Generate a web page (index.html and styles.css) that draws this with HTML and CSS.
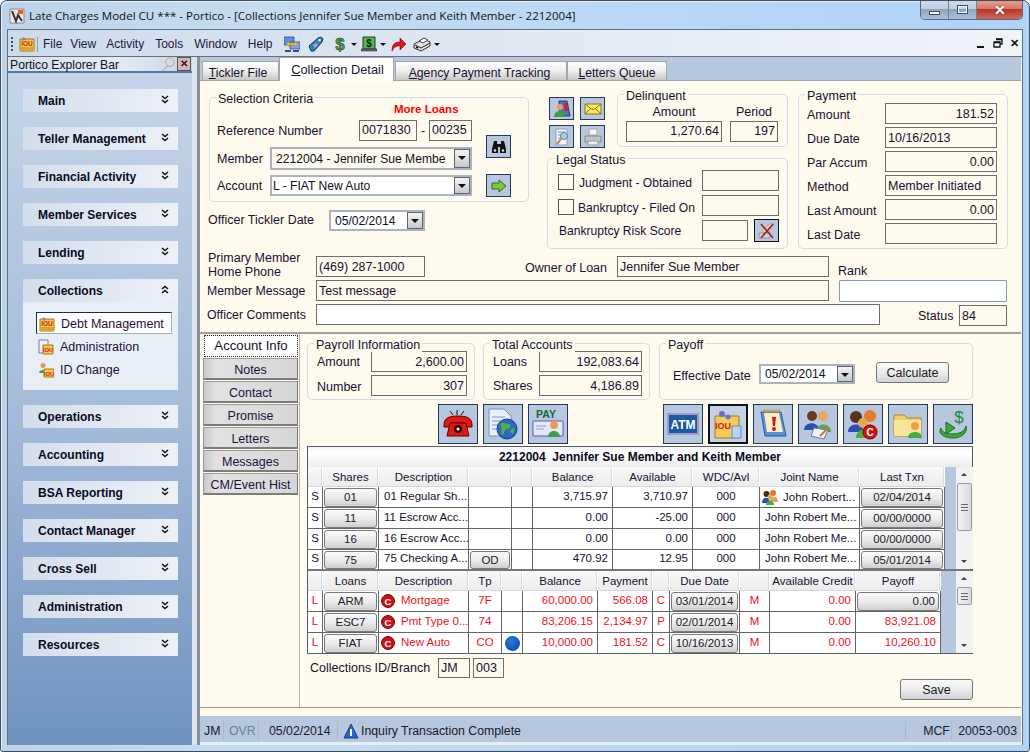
FILE: index.html
```html
<!DOCTYPE html>
<html lang="en">
<head>
<meta charset="utf-8">
<title>Portico</title>
<link rel="stylesheet" href="styles.css">
</head>
<body>
<svg class="defs" aria-hidden="true">
  <symbol id="iou" viewBox="0 0 16 16"><path d="M1 3h14v12H1z" fill="#f2c94a" stroke="#a87a14"/><path d="M1 11h14v4H1z" fill="#d9a52a"/><path d="M4 1l3 2-3 2z" fill="#6f7fc0"/><text x="8" y="10" font-size="6.5" font-weight="700" text-anchor="middle" fill="#d8201a" font-family="Liberation Sans">IOU</text></symbol>
  <symbol id="iouadm" viewBox="0 0 16 16"><path d="M1 1h9v13H1z" fill="#eef2fa" stroke="#6f7f9a"/><path d="M5 6h10v9H5z" fill="#f2c94a" stroke="#a87a14"/><text x="10" y="13" font-size="5.5" font-weight="700" text-anchor="middle" fill="#d8201a" font-family="Liberation Sans">IOU</text></symbol>
  <symbol id="iouid" viewBox="0 0 16 16"><circle cx="5" cy="3.5" r="2.5" fill="#e09a50"/><path d="M1 11c0-4 8-4 8 0z" fill="#3f9f45"/><path d="M6 7h10v8H6z" fill="#f2c94a" stroke="#a87a14"/><text x="11" y="13.5" font-size="5.5" font-weight="700" text-anchor="middle" fill="#d8201a" font-family="Liberation Sans">IOU</text></symbol>
  <symbol id="swap" viewBox="0 0 16 16"><path d="M0 1h10v8H0z" fill="#5f8fe0" stroke="#2f4f9a" stroke-width=".8"/><path d="M6 6h10v7H6z" fill="#7f9fe8" stroke="#2f4f9a" stroke-width=".8"/><path d="M1 14h6v2H1zM9 14h6v2H9z" fill="#3a4f8a"/><path d="M2 8l3-2.500V7h6V5.500L14 8l-3 2.500V9H5v1.500z" fill="#f5c518" stroke="#a07a10" stroke-width=".4"/></symbol>
  <symbol id="tag" viewBox="0 0 16 16"><path d="M1 10L10 2l3-1 2 2-1 3-8 9-3 0z" fill="#1d8fb5" stroke="#10354f"/><circle cx="11.500" cy="4" r="1.500" fill="#fff" stroke="#777" stroke-width=".5"/><path d="M5 9.500L8 7l2 2-3 3z" fill="#e88ac8"/></symbol>
  <symbol id="dollar" viewBox="0 0 16 16"><text x="8" y="14" font-size="17" font-weight="700" text-anchor="middle" fill="#49a83a" stroke="#1c2c1c" stroke-width=".5" font-family="Liberation Sans">$</text></symbol>
  <symbol id="till" viewBox="0 0 16 16"><path d="M2 1h12v12H2z" fill="#55b457" stroke="#333"/><text x="8" y="11" font-size="10" font-weight="700" text-anchor="middle" fill="#0a2a0a" font-family="Liberation Sans">$</text><path d="M0 13h16v2H0z" fill="#666" stroke="#222" stroke-width=".5"/></symbol>
  <symbol id="redarrow" viewBox="0 0 16 16"><path d="M1 15c0-7 3-9 8-9V2l6 6-6 6v-4c-4 0-6 1-8 5z" fill="#d81818" stroke="#7a0a0a" stroke-width=".6"/></symbol>
  <symbol id="printer" viewBox="0 0 18 16"><path d="M1 8l10-5 6 3v4l-9 5-7-3z" fill="#e4e4e4" stroke="#333"/><path d="M6 5l5-3 4 2-5 3z" fill="#fff" stroke="#444"/><path d="M2 9l6 3 9-5" fill="none" stroke="#222"/><path d="M3 11l2 1" stroke="#111" stroke-width="1.500"/></symbol>
  <symbol id="pin" viewBox="0 0 16 16"><circle cx="10.500" cy="5.500" r="4.500" fill="#dcdcdc" stroke="#a8a8a8"/><path d="M8 9l-6 6 2-1 5-4z" fill="#c8c8c8" stroke="#a8a8a8" stroke-width=".5"/></symbol>
  <symbol id="bino" viewBox="0 0 16 14"><path d="M3 1h3v3h4V1h3l2 8v4H9V7H7v6H1V9z" fill="#111"/><circle cx="4" cy="10.500" r="1.300" fill="#ddd"/><circle cx="12" cy="10.500" r="1.300" fill="#ddd"/></symbol>
  <symbol id="garrow" viewBox="0 0 16 14"><path d="M1 4h7V1l7 6-7 6v-3H1z" fill="#7cc83a" stroke="#2f6a1c"/></symbol>
  <symbol id="bookp" viewBox="0 0 18 18"><path d="M6 1h8l3 15H7z" fill="#4c74c0" stroke="#2c3f70"/><path d="M11 3h3l1 8h-3z" fill="#d02020"/><circle cx="7" cy="7" r="3" fill="#e8a050"/><path d="M1 17c0-8 11-8 11 0z" fill="#3f9f45"/></symbol>
  <symbol id="mail" viewBox="0 0 18 14"><path d="M1 2h16v10H1z" fill="#f8ec5a" stroke="#8a7a18"/><path d="M1 2l8 6 8-6M1 12l6-6M17 12l-6-6" fill="none" stroke="#8a7a18"/></symbol>
  <symbol id="docsearch" viewBox="0 0 18 18"><path d="M3 1h11v16H3z" fill="#f2f5fb" stroke="#8a9ec5"/><path d="M5 4h7M5 7h4M5 10h3" stroke="#7a8fbe"/><circle cx="11" cy="8" r="3.500" fill="#a8d0f0" stroke="#777"/><path d="M8 11l-4 5" stroke="#c87a30" stroke-width="2"/></symbol>
  <symbol id="print2" viewBox="0 0 18 18"><path d="M5 1h8v6H5z" fill="#f4f4f4" stroke="#aaa"/><path d="M1 8h16v6H1z" fill="#c4c4c4" stroke="#888"/><path d="M4 13h10v4H4z" fill="#efefef" stroke="#999"/></symbol>
  <symbol id="xtool" viewBox="0 0 18 18"><path d="M4 9L13 1l3 2-8 9z" fill="#e8dcc0" stroke="#888" stroke-width=".6"/><path d="M1 11h11v5H1z" fill="#c8d0dc" stroke="#667" stroke-width=".5"/><path d="M3 2l12 14M15 2L3 16" stroke="#b81818" stroke-width="1.600"/></symbol>
  <symbol id="phone" viewBox="0 0 32 32"><path d="M15 2v5M8 3l3 4M22 3l-3 4" stroke="#111"/><path d="M2 17c0-7 5-9 14-9s14 2 14 9v2h-7v-4H9v4H2z" fill="#e01818" stroke="#600"/><path d="M8 15h16l3 13H5z" fill="#e01818" stroke="#600"/><circle cx="16" cy="21" r="4" fill="#300"/><circle cx="16" cy="21" r="1.500" fill="#fff"/></symbol>
  <symbol id="web" viewBox="0 0 32 32"><path d="M2 1h15l7 7v20H2z" fill="#e8eefa" stroke="#7f8fb5"/><path d="M5 9h13M5 13h9M5 17h6M5 21h5" stroke="#7f9ad0"/><circle cx="20" cy="21" r="10" fill="#2b67c8" stroke="#173b80"/><path d="M13 16c4-3 6 1 9 0 3 1 1 5-2 5s-2 5-5 6c-2-3 1-6-2-11zM25 20l3 1-2 5-3-2z" fill="#4fb03f"/></symbol>
  <symbol id="pay" viewBox="0 0 32 32"><text x="14" y="10" font-size="10.500" font-weight="700" text-anchor="middle" fill="#0f6b2c" font-family="Liberation Sans">PAY</text><path d="M1 13h30v15H1z" fill="#e4e8fb" stroke="#5a5ac0"/><path d="M4 18h10M4 21h8" stroke="#8a9ad0"/><circle cx="22" cy="17" r="4" fill="#e8a050"/><path d="M16 29c0-8 12-8 12 0z" fill="#3f9f45"/></symbol>
  <symbol id="atm" viewBox="0 0 32 32"><path d="M0 5h32v22H0z" fill="#a09ac8"/><path d="M2 7h28v18H2z" fill="#1c5ba0"/><text x="16" y="21" font-size="12" font-weight="700" text-anchor="middle" fill="#fff" font-family="Liberation Sans">ATM</text></symbol>
  <symbol id="folderiou" viewBox="0 0 32 32"><path d="M3 8h24v22H3z" fill="#f0cc5a" stroke="#a87a14"/><circle cx="10" cy="6" r="3" fill="#6f6fc8"/><circle cx="16" cy="9" r="2.500" fill="#6f6fc8"/><text x="11" y="21" font-size="9" font-weight="700" text-anchor="middle" fill="#d8201a" font-family="Liberation Sans">IOU</text><path d="M20 18h9v12h-9z" fill="#b8d4f5" stroke="#6a8ac0"/></symbol>
  <symbol id="notepad" viewBox="0 0 32 32"><path d="M4 4h20l5 24H8z" fill="#5a90d8" stroke="#2f5a9c"/><path d="M7 5h15l4 19H10z" fill="#f5eec8"/><path d="M6 3h17" stroke="#c89a30" stroke-width="3" stroke-dasharray="2 1"/><path d="M15 9h4l-1 9h-2z" fill="#d81818"/><circle cx="17" cy="21" r="2" fill="#d81818"/></symbol>
  <symbol id="peoplesign" viewBox="0 0 32 32"><circle cx="10" cy="8" r="5" fill="#6a3a1a"/><path d="M2 22c0-9 15-9 15 0z" fill="#2850b8"/><circle cx="21" cy="8" r="5" fill="#e8a860"/><path d="M14 24c0-10 15-10 15 0z" fill="#4faa5a"/><path d="M12 20l14 2-4 9-13-3z" fill="#eef2fa" stroke="#6a7a9a"/><path d="M18 28l9-9" stroke="#c87a30" stroke-width="2"/></symbol>
  <symbol id="peoplec" viewBox="0 0 32 32"><circle cx="9" cy="9" r="6" fill="#5a3018"/><path d="M1 24c0-10 16-10 16 0z" fill="#2850b8"/><circle cx="23" cy="8" r="6" fill="#e87a30"/><path d="M15 24c0-10 16-10 16 0z" fill="#e8a860"/><circle cx="16" cy="15" r="5" fill="#e0a858"/><path d="M9 30c0-11 14-11 14 0z" fill="#4faa3a"/><circle cx="23" cy="24" r="7" fill="#d81010" stroke="#700"/><text x="23" y="28" font-size="10" font-weight="700" text-anchor="middle" fill="#fff" font-family="Liberation Sans">C</text></symbol>
  <symbol id="folderp" viewBox="0 0 32 32"><path d="M2 7h10l3 3h14v18H2z" fill="#f0cf68" stroke="#b08a20"/><path d="M2 12h27v16H2z" fill="#f8e49a"/><circle cx="23" cy="18" r="4" fill="#e8a050"/><path d="M16 30c0-8 14-8 14 0z" fill="#3faf45"/></symbol>
  <symbol id="recur" viewBox="0 0 32 32"><text x="22" y="15" font-size="17" text-anchor="middle" fill="#1a8a3a" font-family="Liberation Sans">$</text><path d="M4 20c-4 6 4 10 12 10s15-5 13-12c-1 5-6 8-13 8s-11-2-12-6z" fill="#3fa83a" stroke="#1a6a20"/><path d="M9 14l9 6-9 6z" fill="#3fa83a" stroke="#1a6a20"/></symbol>
  <symbol id="redc" viewBox="0 0 14 14"><circle cx="7" cy="7" r="6.500" fill="#d01010" stroke="#701010"/><text x="7" y="10.500" font-size="9.500" font-weight="700" text-anchor="middle" fill="#fff" font-family="Liberation Sans">C</text></symbol>
  <symbol id="group" viewBox="0 0 16 16"><circle cx="4.500" cy="5" r="3" fill="#4a2a18"/><circle cx="11" cy="4" r="3" fill="#e07a30"/><path d="M0 14c0-7 8-7 8 0z" fill="#2850b8"/><path d="M8 13c0-7 8-7 8 0z" fill="#e8a050"/><circle cx="8" cy="8" r="2.500" fill="#e0a858"/><path d="M4 16c0-6 8-6 8 0z" fill="#3faf45"/></symbol>
  <symbol id="info" viewBox="0 0 16 16"><path d="M8 1l7 14H1z" fill="#2a64c8" stroke="#1a3a80"/><path d="M7 6h2v7H7z" fill="#fff"/></symbol>
  <symbol id="dbl" viewBox="0 0 8 9"><path d="M1 1l3 2.500L7 1M1 5l3 2.500L7 5" fill="none" stroke="#111" stroke-width="1.500"/></symbol>
  <symbol id="dblup" viewBox="0 0 8 9"><path d="M1 4L4 1.500 7 4M1 8l3-2.500L7 8" fill="none" stroke="#111" stroke-width="1.500"/></symbol>
</svg>

<div class="window">
  <header class="titlebar">
    <svg class="t-icon" viewBox="0 0 16 16"><path d="M1 1h14v14H1z" fill="#f5e8e0" stroke="#888"/><path d="M3 3l4 10 2-6 4 6" fill="none" stroke="#334" stroke-width="2"/><path d="M9 2h5v4H9z" fill="#e8601c"/></svg>
    <span class="t-text">Late Charges Model CU *** - Portico - [Collections Jennifer Sue Member and Keith Member - 2212004]</span>
    <div class="wctl">
      <span class="wb wb-min"><i></i></span>
      <span class="wb wb-max"><i></i></span>
      <span class="wb wb-close">✕</span>
    </div>
  </header>

  <div class="frame">
    <nav class="menubar">
      <span class="grip"></span>
      <svg class="mi16"><use href="#iou"/></svg>
      <span class="msep"></span>
      <span class="menu m-file">File</span>
      <span class="menu m-view">View</span>
      <span class="menu m-act">Activity</span>
      <span class="menu m-tools">Tools</span>
      <span class="menu m-win">Window</span>
      <span class="menu m-help">Help</span>
      <svg class="mi16 tb1"><use href="#swap"/></svg>
      <svg class="mi16 tb2"><use href="#tag"/></svg>
      <svg class="mi16 tb3"><use href="#dollar"/></svg>
      <span class="caret c1"></span>
      <svg class="mi16 tb4"><use href="#till"/></svg>
      <span class="caret c1"></span>
      <svg class="mi16 tb5"><use href="#redarrow"/></svg>
      <svg class="mi18 tb6"><use href="#printer"/></svg>
      <span class="caret c2"></span>
      <div class="mdi">
        <span class="mdi-min"></span>
        <svg class="mdi-res" viewBox="0 0 10 10"><path d="M3 1h6v5H7M1 4h6v5H1z" fill="none" stroke="#111" stroke-width="1.300"/><path d="M3 1.500h6M1 4.500h6" stroke="#111" stroke-width="1.500"/></svg>
        <span class="mdi-x">✕</span>
      </div>
    </nav>

    <div class="main">
      <aside class="side">
        <div class="side-head">
          <span class="side-title">Portico Explorer Bar</span>
          <svg class="side-pin"><use href="#pin"/></svg>
          <span class="side-x">✕</span>
        </div>
        <div class="side-body">
          <div class="g-head"><span>Main</span><svg class="chev"><use href="#dbl"/></svg></div>
          <div class="g-head"><span>Teller Management</span><svg class="chev"><use href="#dbl"/></svg></div>
          <div class="g-head"><span>Financial Activity</span><svg class="chev"><use href="#dbl"/></svg></div>
          <div class="g-head"><span>Member Services</span><svg class="chev"><use href="#dbl"/></svg></div>
          <div class="g-head"><span>Lending</span><svg class="chev"><use href="#dbl"/></svg></div>
          <div class="g-head g-open"><span>Collections</span><svg class="chev"><use href="#dblup"/></svg></div>
          <div class="g-body">
            <div class="g-item g-sel"><svg class="gi"><use href="#iou"/></svg><span>Debt Management</span></div>
            <div class="g-item"><svg class="gi"><use href="#iouadm"/></svg><span>Administration</span></div>
            <div class="g-item"><svg class="gi"><use href="#iouid"/></svg><span>ID Change</span></div>
          </div>
          <div class="g-head"><span>Operations</span><svg class="chev"><use href="#dbl"/></svg></div>
          <div class="g-head"><span>Accounting</span><svg class="chev"><use href="#dbl"/></svg></div>
          <div class="g-head"><span>BSA Reporting</span><svg class="chev"><use href="#dbl"/></svg></div>
          <div class="g-head"><span>Contact Manager</span><svg class="chev"><use href="#dbl"/></svg></div>
          <div class="g-head"><span>Cross Sell</span><svg class="chev"><use href="#dbl"/></svg></div>
          <div class="g-head"><span>Administration</span><svg class="chev"><use href="#dbl"/></svg></div>
          <div class="g-head"><span>Resources</span><svg class="chev"><use href="#dbl"/></svg></div>
        </div>
      </aside>
      <div class="split"></div>

      <section class="content">
        <div class="tabs">
          <span class="tab t1"><u>T</u>ickler File</span>
          <span class="tab tab-on t2"><u>C</u>ollection Detail</span>
          <span class="tab t3"><u>A</u>gency Payment Tracking</span>
          <span class="tab t4"><u>L</u>etters Queue</span>
        </div>

        <div class="panel">
          <div class="top">
            <div class="col-left">
              <div class="fs fs-sel">
                <span class="leg">Selection Criteria</span>
                <div class="sel-fields">
                  <div class="more">More Loans</div>
                  <div class="row r-ref"><span class="l-ref">Reference Number</span><span class="in w58">0071830</span><span class="dash">-</span><span class="in w43">00235</span></div>
                  <div class="row r-mem"><span class="l-mem">Member</span><span class="combo cb202 cb-cream"><span class="cb-t">2212004 - Jennifer Sue Membe</span><span class="cb-a"></span></span></div>
                  <div class="row r-acc"><span class="l-mem">Account</span><span class="combo cb202 cb21"><span class="cb-t cb-tl">L - FIAT New Auto</span><span class="cb-a"></span></span></div>
                </div>
                <div class="sel-btns">
                  <span class="ib ib-s"><svg class="i16"><use href="#bino"/></svg></span>
                  <span class="ib ib-s"><svg class="i16"><use href="#garrow"/></svg></span>
                </div>
              </div>
              <div class="row r-tick"><span class="l-tick">Officer Tickler Date</span><span class="combo cb96"><span class="cb-t">05/02/2014</span><span class="cb-a"></span></span></div>
            </div>

            <div class="col-mid">
              <div class="mid-top">
                <div class="sq-btns">
                  <span class="ib ib-t"><svg class="i18"><use href="#bookp"/></svg></span>
                  <span class="ib ib-t"><svg class="i18"><use href="#mail"/></svg></span>
                  <span class="ib ib-t"><svg class="i18"><use href="#docsearch"/></svg></span>
                  <span class="ib ib-t"><svg class="i18"><use href="#print2"/></svg></span>
                </div>
                <div class="fs fs-del">
                  <span class="leg">Delinquent</span>
                  <div class="del-grid">
                    <span class="hd">Amount</span><span class="hd">Period</span>
                    <span class="in ta-r">1,270.64</span><span class="in ta-r">197</span>
                  </div>
                </div>
              </div>
              <div class="fs fs-legal">
                <span class="leg">Legal Status</span>
                <div class="row lg"><span class="chk"></span><span class="lg-t">Judgment - Obtained</span><span class="in w77 ml-a"></span></div>
                <div class="row lg"><span class="chk"></span><span class="lg-t lg-t2">Bankruptcy - Filed On</span><span class="in w77 ml-a"></span></div>
                <div class="row lg"><span class="lg-r">Bankruptcy Risk Score</span><span class="in w46 ml-a"></span><span class="ib ib-x"><svg class="i18"><use href="#xtool"/></svg></span></div>
              </div>
            </div>

            <div class="fs fs-pay">
              <span class="leg">Payment</span>
              <div class="row pay"><span class="pl">Amount</span><span class="in w112 ta-r">181.52</span></div>
              <div class="row pay"><span class="pl">Due Date</span><span class="in w112">10/16/2013</span></div>
              <div class="row pay"><span class="pl">Par Accum</span><span class="in w112 ta-r">0.00</span></div>
              <div class="row pay"><span class="pl">Method</span><span class="in w112">Member Initiated</span></div>
              <div class="row pay"><span class="pl">Last Amount</span><span class="in w112 ta-r">0.00</span></div>
              <div class="row pay"><span class="pl">Last Date</span><span class="in w112"></span></div>
            </div>
          </div>

          <div class="info">
            <div class="row r-a">
              <span class="l-two">Primary Member<br>Home Phone</span>
              <span class="in w109">(469) 287-1000</span>
              <span class="l-owner">Owner of Loan</span>
              <span class="in w212">Jennifer Sue Member</span>
              <span class="l-rank">Rank</span>
            </div>
            <div class="row r-b">
              <span class="l-info">Member Message</span>
              <span class="in w513">Test message</span>
              <span class="rank-in"></span>
            </div>
            <div class="row r-c">
              <span class="l-info">Officer Comments</span>
              <span class="in w564 in-white"></span>
              <span class="l-status">Status</span>
              <span class="in w48 st">84</span>
            </div>
          </div>

          <div class="lower">
            <div class="side-tabs">
              <span class="st-on">Account Info</span>
              <span class="st-b">Notes</span>
              <span class="st-b">Contact</span>
              <span class="st-b">Promise</span>
              <span class="st-b">Letters</span>
              <span class="st-b">Messages</span>
              <span class="st-b">CM/Event Hist</span>
            </div>
            <div class="acct">
              <div class="fs-row">
                <div class="fs fs-roll">
                  <span class="leg">Payroll Information</span>
                  <div class="row lw r1"><span class="rl">Amount</span><span class="in w96 ta-r">2,600.00</span></div>
                  <div class="row lw r2"><span class="rl rl2">Number</span><span class="in w96 ta-r">307</span></div>
                </div>
                <div class="fs fs-tot">
                  <span class="leg">Total Accounts</span>
                  <div class="row lw r1"><span class="tl">Loans</span><span class="in w103 ta-r">192,083.64</span></div>
                  <div class="row lw r2"><span class="tl">Shares</span><span class="in w103 ta-r">4,186.89</span></div>
                </div>
                <div class="fs fs-off">
                  <span class="leg">Payoff</span>
                  <div class="row off">
                    <span class="ol">Effective Date</span>
                    <span class="combo cb96 cb20"><span class="cb-t">05/02/2014</span><span class="cb-a"></span></span>
                    <span class="btn calc">Calculate</span>
                  </div>
                </div>
              </div>

              <div class="big-row">
                <span class="ib ib-l"><svg class="i32"><use href="#phone"/></svg></span>
                <span class="ib ib-l"><svg class="i32"><use href="#web"/></svg></span>
                <span class="ib ib-l"><svg class="i32"><use href="#pay"/></svg></span>
                <span class="big-gap"></span>
                <span class="ib ib-l"><svg class="i32"><use href="#atm"/></svg></span>
                <span class="ib ib-l ib-on"><svg class="i32"><use href="#folderiou"/></svg></span>
                <span class="ib ib-l"><svg class="i32"><use href="#notepad"/></svg></span>
                <span class="ib ib-l"><svg class="i32"><use href="#peoplesign"/></svg></span>
                <span class="ib ib-l"><svg class="i32"><use href="#peoplec"/></svg></span>
                <span class="ib ib-l"><svg class="i32"><use href="#folderp"/></svg></span>
                <span class="ib ib-l"><svg class="i32"><use href="#recur"/></svg></span>
              </div>

              <div class="grid">
                <div class="g-title">2212004&nbsp; Jennifer Sue Member and Keith Member</div>
                <div class="g-sec g-sh">
                  <div class="g-tbl">
                    <div class="gr gr-s gh"><span></span><span>Shares</span><span>Description</span><span></span><span></span><span>Balance</span><span>Available</span><span>WDC/Avl</span><span>Joint Name</span><span>Last Txn</span></div>
                    <div class="gr gr-s"><span class="c">S</span><span class="bc"><b class="gb">01</b></span><span>01 Regular Sh...</span><span></span><span></span><span class="r">3,715.97</span><span class="r">3,710.97</span><span class="c">000</span><span class="jn"><svg class="i16"><use href="#group"/></svg>John Robert...</span><span class="bc"><b class="gb">02/04/2014</b></span></div>
                    <div class="gr gr-s"><span class="c">S</span><span class="bc"><b class="gb">11</b></span><span>11 Escrow Acc...</span><span></span><span></span><span class="r">0.00</span><span class="r">-25.00</span><span class="c">000</span><span>John Robert Me...</span><span class="bc"><b class="gb">00/00/0000</b></span></div>
                    <div class="gr gr-s"><span class="c">S</span><span class="bc"><b class="gb">16</b></span><span>16 Escrow Acc...</span><span></span><span></span><span class="r">0.00</span><span class="r">0.00</span><span class="c">000</span><span>John Robert Me...</span><span class="bc"><b class="gb">00/00/0000</b></span></div>
                    <div class="gr gr-s gr-last"><span class="c">S</span><span class="bc"><b class="gb">75</b></span><span>75 Checking A...</span><span class="bc"><b class="gb">OD</b></span><span></span><span class="r">470.92</span><span class="r">12.95</span><span class="c">000</span><span>John Robert Me...</span><span class="bc"><b class="gb">05/01/2014</b></span></div>
                  </div>
                  <div class="g-blue gb10"></div>
                  <div class="sb"><span class="sb-up"></span><span class="sb-th th48"><i></i></span><span class="sb-sp"></span><span class="sb-dn"></span></div>
                </div>
                <div class="g-sec g-ln">
                  <div class="g-tbl">
                    <div class="gr gr-l gh"><span></span><span>Loans</span><span>Description</span><span>Tp</span><span></span><span>Balance</span><span>Payment</span><span></span><span>Due Date</span><span></span><span>Available Credit</span><span>Payoff</span></div>
                    <div class="gr gr-l red"><span class="c">L</span><span class="bc"><b class="gb">ARM</b></span><span class="dc"><svg class="i14"><use href="#redc"/></svg>Mortgage</span><span class="c">7F</span><span></span><span class="r">60,000.00</span><span class="r">566.08</span><span class="c">C</span><span class="bc"><b class="gb">03/01/2014</b></span><span class="c">M</span><span class="r">0.00</span><span class="bc"><b class="gb gb-r">0.00</b></span></div>
                    <div class="gr gr-l red"><span class="c">L</span><span class="bc"><b class="gb">ESC7</b></span><span class="dc"><svg class="i14"><use href="#redc"/></svg>Pmt Type 0...</span><span class="c">74</span><span></span><span class="r">83,206.15</span><span class="r">2,134.97</span><span class="c">P</span><span class="bc"><b class="gb">02/01/2014</b></span><span class="c">M</span><span class="r">0.00</span><span class="r">83,921.08</span></div>
                    <div class="gr gr-l red gr-end"><span class="c">L</span><span class="bc"><b class="gb">FIAT</b></span><span class="dc"><svg class="i14"><use href="#redc"/></svg>New Auto</span><span class="c">CO</span><span class="c"><i class="dot"></i></span><span class="r">10,000.00</span><span class="r">181.52</span><span class="c">C</span><span class="bc"><b class="gb">10/16/2013</b></span><span class="c">M</span><span class="r">0.00</span><span class="r">10,260.10</span></div>
                  </div>
                  <div class="g-blue gb14"></div>
                  <div class="sb"><span class="sb-up"></span><span class="sb-th th18"><i></i></span><span class="sb-sp"></span><span class="sb-dn"></span></div>
                </div>
              </div>

              <div class="row coll">
                <span class="cl">Collections ID/Branch</span>
                <span class="in w32">JM</span>
                <span class="in w31">003</span>
              </div>
              <div class="save-row"><span class="btn save">Save</span></div>
            </div>
          </div>
        </div>

        <div class="creamstrip"></div>
        <footer class="status">
          <span class="s s-jm">JM</span>
          <span class="s s-ovr">OVR</span>
          <span class="s s-date">05/02/2014</span>
          <span class="s s-msg"><svg class="i16"><use href="#info"/></svg>Inquiry Transaction Complete</span>
          <span class="s s-mcf">MCF</span>
          <span class="s s-no">20053-003</span>
        </footer>
        <div class="whitestrip"></div>
      </section>
    </div>
  </div>
</div>
</body>
</html>
```

FILE: styles.css
```css
* { box-sizing: border-box; }
html, body { margin: 0; padding: 0; }
body { width: 1030px; height: 752px; overflow: hidden; background: #fff; font-family: "Liberation Sans", Arial, sans-serif; font-size: 12.5px; color: #1a1030; }
.defs { display: none; }
svg { flex: none; }
u { text-decoration: underline; }

.window { width: 1030px; height: 752px; border: 1px solid #3e4c5c; border-radius: 7px 7px 3px 3px; background: linear-gradient(90deg, #bcd3ea 0%, #c6dcf1 25%, #b9d8f6 60%, #afd2f7 100%); overflow: hidden; box-shadow: inset 1px 1px 0 #e8f2fb; }
.titlebar { height: 28px; display: flex; align-items: center; padding-left: 8px; position: relative; }
.t-icon { width: 16px; height: 16px; margin-top: 2px; }
.t-text { font-family: "Open Sans", "Liberation Sans", sans-serif; font-size: 11.55px; color: #0b1420; margin-left: 4px; margin-top: 1px; white-space: nowrap; }
.wctl { margin-left: auto; margin-right: 6px; align-self: flex-start; display: flex; height: 20px; border: 1px solid #55687f; border-top: 0; border-radius: 0 0 5px 5px; overflow: hidden; margin-top: -1px; }
.wb { display: flex; align-items: center; justify-content: center; height: 19px; width: 28px; background: linear-gradient(#cfdcec 0%, #c1d0e2 45%, #8ea6c0 50%, #a9c0d8 100%); border-right: 1px solid #6f8198; }
.wb-min i { display: block; width: 11px; height: 4px; border: 1px solid #3f4f62; background: #fff; margin-top: 6px; }
.wb-max i { display: block; width: 11px; height: 9px; border: 1px solid #3f4f62; box-shadow: inset 0 0 0 1px #fff; }
.wb-close { width: 45px; border-right: 0; background: linear-gradient(#e4a090 0%, #d47a6c 45%, #b8362a 50%, #d06a58 100%); color: #fff; font-size: 14px; font-weight: 700; text-shadow: 0 0 2px #333; }

.frame { margin: 0 6px; height: 716px; border: 1px solid #5c7088; background: #dbe5f1; display: flex; flex-direction: column; }
.menubar { height: 27px; padding-top: 2px; display: flex; align-items: center; border-bottom: 1px solid #6b6f75; background: linear-gradient(90deg, #ccdaec 0%, #dde6f2 40%, #f1f4f9 100%); flex: none; font-size: 12px; color: #1a1a3a; }
.grip { width: 2px; height: 14px; margin-left: 3px; background: repeating-linear-gradient(#34507c 0 2px, transparent 2px 4px); }
.mi16 { width: 16px; height: 16px; }
.menubar > .mi16:first-of-type { margin-left: 6px; }
.mi18 { width: 18px; height: 16px; }
.msep { width: 1px; height: 15px; background: #8aa0ba; margin-left: 2px; }
.menu { white-space: nowrap; }
.m-file { margin-left: 5px; }
.m-view { margin-left: 8px; }
.m-act { margin-left: 10px; }
.m-tools { margin-left: 11px; }
.m-win { margin-left: 11px; }
.m-help { margin-left: 11px; }
.tb1 { margin-left: 11px; }
.tb2 { margin-left: 8px; }
.tb3 { margin-left: 8px; }
.caret { width: 0; height: 0; border-left: 3px solid transparent; border-right: 3px solid transparent; border-top: 3px solid #111; margin-left: 3px; }
.tb4 { margin-left: 4px; }
.tb5 { margin-left: 5px; }
.tb6 { margin-left: 6px; }
.mdi { margin-left: auto; display: flex; align-items: center; padding-right: 3px; }
.mdi-min { width: 7px; height: 2px; background: #111; margin-top: 6px; }
.mdi-res { width: 10px; height: 10px; margin-left: 9px; margin-top: -2px; }
.mdi-x { font-size: 11px; color: #111; margin-left: 7px; margin-top: -2px; font-weight: 700; }

.main { display: flex; height: 688px; }
.side { width: 184px; flex: none; display: flex; flex-direction: column; }
.side-head { height: 16px; display: flex; align-items: center; border-bottom: 2px solid #5678a4; background: linear-gradient(90deg, #d5dfee, #e4ebf4 60%, #c8d4e4); padding-left: 2px; font-size: 12.2px; color: #11112a; flex: none; }
.side-title { white-space: nowrap; margin-top: 1px; }
.side-pin { width: 15px; height: 15px; margin-left: auto; }
.side-x { width: 14px; height: 14px; margin: 0 1px 0 2px; background: #d8b4b0; border: 1px solid #555; color: #222; font-size: 10px; font-weight: 700; line-height: 12px; text-align: center; }
.side-body { flex: 1; background: linear-gradient(#c5d4e8 0%, #a5bcda 50%, #6f92bf 100%); padding: 16px 0 0 15px; }
.g-head { width: 155px; height: 23px; display: flex; align-items: center; justify-content: space-between; padding: 0 9px 0 15px; margin-bottom: 15px; background: linear-gradient(90deg, #d3deec, #edf1f7); font-weight: 700; font-size: 12px; color: #0a0a22; }
.chev { width: 8px; height: 9px; margin-top: -3px; }
.g-open { margin-bottom: 0; }
.g-body { width: 155px; height: 88px; margin-bottom: 15px; background: #e8eef6; padding: 10px 6px 0 13px; }
.g-item { height: 23px; display: flex; align-items: center; color: #1c1040; white-space: nowrap; padding-left: 2px; font-size: 12.5px; }
.gi { width: 16px; height: 16px; margin-right: 6px; }
.g-sel { width: 136px; height: 22px; background: #fff; border: 1px solid #9db0c8; border-top-color: #1c2c48; border-left-color: #1c2c48; padding-left: 2px; padding-top: 2px; margin-bottom: 1px; }

.split { width: 5px; flex: none; background: #dbe5f1; }
.content { flex: 1; display: flex; flex-direction: column; border-left: 3px solid #8c8f94; background: #fffaee; min-width: 0; padding-right: 1px; }
.tabs { height: 24px; display: flex; align-items: flex-end; background: #b6c7de; flex: none; padding-left: 2px; border-bottom: 1px solid #a0a4ab; }
.tab { height: 19px; border: 1px solid #a2a6ac; border-bottom: 0; background: linear-gradient(#fff 0%, #f0f0f0 45%, #c8c8c8 100%); display: block; text-align: center; line-height: 22px; white-space: nowrap; font-size: 12.2px; }
.t1 { width: 77px; padding-right: 5px; }
.t2 { width: 115px; }
.t3 { width: 172px; margin-left: 1px; padding-right: 3px; }
.t4 { width: 100px; }
.tab-on { height: 24px; background: #fff; margin-bottom: -1px; line-height: 23px; font-size: 12.8px; padding-left: 2px; }

.panel { height: 627px; background: #fffaee; border-bottom: 1px solid #9a9a9a; flex: none; }
.row { display: flex; align-items: center; }
.in { display: block; height: 21px; line-height: 19px; border: 1px solid #6e6e6e; padding: 0 2px; white-space: nowrap; overflow: hidden; background: #fffaee; flex: none; }
.in-white { background: #fff; }
.ta-r { text-align: right; }
.w31 { width: 31px; } .w32 { width: 32px; } .w43 { width: 43px; } .w46 { width: 46px; } .w48 { width: 48px; } .w58 { width: 58px; }
.w77 { width: 77px; } .w96 { width: 96px; } .w103 { width: 103px; } .w109 { width: 109px; } .w112 { width: 112px; } .w212 { width: 212px; } .w513 { width: 513px; } .w564 { width: 564px; }
.ml-a { margin-left: auto; }

.fs { position: relative; border: 1px solid #d2dde9; border-radius: 5px; flex: none; }
.leg { position: absolute; top: -6px; left: 6px; padding: 0 2px; background: #fffaee; line-height: 14px; white-space: nowrap; color: #14142c; }

.combo { display: flex; align-items: center; height: 21px; border: 2px solid #a9b2bf; background: #fff; flex: none; font-size: 12.1px; }
.cb-cream { background: #fffaee; height: 23px; }
.cb202 { width: 202px; }
.cb96 { width: 96px; }
.cb20 { height: 20px; }
.cb-t { flex: 1; padding-left: 4px; white-space: nowrap; overflow: hidden; color: #101028; }
.cb-tl { padding-left: 1px; }
.cb-a { width: 16px; height: 100%; flex: none; background: linear-gradient(#f4f4f4, #c8c8c8); border: 1px solid #5e6670; position: relative; }
.cb-a::after { content: ""; position: absolute; left: 3px; top: 6px; border-left: 4px solid transparent; border-right: 4px solid transparent; border-top: 4px solid #111; }

.ib { display: flex; align-items: center; justify-content: center; background: #b6c7de; border: 1px solid #243a58; flex: none; }
.i14 { width: 14px; height: 14px; }
.i16 { width: 16px; height: 16px; }
.i18 { width: 18px; height: 18px; }
.i32 { width: 32px; height: 32px; }
.ib-s { width: 25px; height: 23px; }
.ib-t { width: 25px; height: 23px; }
.ib-x { width: 25px; height: 23px; margin-left: 6px; border-color: #111; }
.ib-l { width: 40px; height: 40px; }
.ib-on { border: 2px solid #111; background: #c2d1e5; }

.top { display: flex; height: 175px; padding: 13px 0 0 9px; }
.col-left { width: 320px; margin-top: 3px; flex: none; }
.fs-sel { height: 105px; display: flex; padding-left: 7px; }
.sel-fields { width: 255px; padding-top: 4px; flex: none; }
.more { height: 15px; line-height: 15px; margin-left: 177px; color: #f00; font-weight: 700; font-size: 11.500px; white-space: nowrap; }
.r-ref { height: 21px; margin-top: 3px; }
.l-ref { width: 142px; white-space: nowrap; }
.dash { width: 12px; text-align: center; }
.r-mem { margin-top: 6px; height: 23px; }
.l-mem { width: 53px; }
.r-acc { margin-top: 5px; height: 21px; }
.sel-btns { margin-left: 14px; padding-top: 37px; display: flex; flex-direction: column; gap: 16px; }
.r-tick { margin-top: 8px; margin-left: -1px; height: 21px; }
.l-tick { width: 121px; white-space: nowrap; margin-top: -2px; }

.col-mid { width: 241px; margin-left: 18px; flex: none; }
.mid-top { display: flex; height: 53px; }
.sq-btns { margin: 3px 0 0 2px; width: 56px; display: grid; grid-template-columns: 25px 25px; grid-auto-rows: 23px; gap: 5px 6px; }
.fs-del { width: 171px; height: 53px; margin-left: 12px; padding: 10px 0 0 8px; }
.del-grid { display: grid; grid-template-columns: 96px 48px; column-gap: 8px; grid-template-rows: 16px 21px; }
.hd { text-align: center; line-height: 14px; }
.fs-legal { width: 241px; height: 91px; margin-top: 11px; padding: 11px 8px 0 10px; }
.lg { height: 21px; margin-bottom: 4px; }
.chk { width: 16px; height: 16px; border: 1px solid #555; background: #fffaee; flex: none; margin-top: 3px; }
.lg-t { margin-left: 5px; margin-top: 5px; white-space: nowrap; font-size: 12.1px; }
.lg-t2 { margin-left: 4px; }
.lg-r { margin-left: 1px; margin-top: 1px; white-space: nowrap; font-size: 12.1px; }

.fs-pay { width: 210px; height: 155px; margin-left: 10px; padding: 8px 0 0 8px; }
.pay { height: 21px; margin-bottom: 3px; }
.pay .in { line-height: 21px; }
.pl { width: 78px; white-space: nowrap; margin-top: 2px; }

.info { height: 76px; padding-left: 8px; }
.info .in { line-height: 21px; }
.l-two { width: 108px; line-height: 14px; margin-top: -4px; white-space: nowrap; }
.r-a { height: 21px; }
.l-owner { width: 92px; margin-left: 100px; white-space: nowrap; margin-top: 3px; }
.l-rank { margin-left: 9px; margin-top: 9px; white-space: nowrap; }
.r-b { height: 21px; margin-top: 3px; }
.l-info { width: 109px; margin-left: -1px; white-space: nowrap; font-size: 12.3px; }
.rank-in { width: 168px; height: 22px; margin-left: 10px; margin-top: 1px; border: 1px solid #7f9db9; background: #fff; flex: none; border-radius: 1px; }
.r-c { height: 21px; margin-top: 3px; }
.l-status { width: 41px; margin-left: 38px; white-space: nowrap; margin-top: 3px; }
.st { margin-top: 2px; }

.lower { display: flex; height: 375px; border-top: 2px solid #a0a0a0; }
.side-tabs { width: 100px; flex: none; border-right: 1px solid #b8b8b8; padding: 1px 0 0 4px; display: flex; flex-direction: column; }
.st-on { width: 94px; height: 22px; line-height: 20px; text-align: center; background: #fff; border: 1px dotted #222; margin-bottom: 1px; font-size: 13.2px; }
.st-b { width: 95px; height: 22px; line-height: 23px; text-align: center; margin-bottom: 1px; margin-left: -1px; background: linear-gradient(90deg, #c8c8c8, #e2e2e2 12%, #d6d6d6); border: 1px solid #9a9a9a; border-right-color: #777; border-bottom: 2px solid #7c7c7c; color: #221040; }

.acct { flex: 1; padding-left: 7px; }
.fs-row { display: flex; gap: 8px; margin-top: 9px; height: 57px; }
.fs-roll { width: 168px; padding: 7px 0 0 9px; }
.fs-tot { width: 167px; margin-right: 1px; padding: 7px 0 0 9px; }
.fs-off { width: 314px; padding-top: 19px; }
.lw { height: 21px; margin-bottom: 3px; }
.lw .in { line-height: 20px; }
.rl { width: 54px; }
.rl2 { margin-top: 2px; }
.tl { width: 46px; }
.off { height: 21px; }
.ol { width: 86px; margin-left: 13px; white-space: nowrap; margin-top: 5px; }
.btn { display: block; text-align: center; white-space: nowrap; background: linear-gradient(#fafafa, #ececec 50%, #d2d2d2); border: 1px solid #6f7780; border-radius: 3px; color: #1a1a2a; }
.calc { width: 73px; height: 21px; line-height: 20px; margin-left: 21px; margin-top: -3px; }

.big-row { display: flex; gap: 5px; margin-top: 4px; padding-left: 131px; height: 40px; }
.big-gap { width: 85px; flex: none; }

.grid { width: 666px; height: 208px; margin-top: 2px; border: 1px solid #555f6c; background: #fffaee; display: flex; flex-direction: column; }
.g-title { height: 20px; line-height: 20px; flex: none; text-align: center; font-weight: 700; font-size: 12px; color: #0a0a1a; background: linear-gradient(#f4f4f4, #fff 30%, #ececec); }
.g-sec { display: flex; flex: none; }
.g-sh { height: 104px; border-bottom: 2px solid #777; }
.g-ln { height: 82px; }
.g-tbl { flex: none; }
.g-sh .g-tbl { width: 637px; }
.g-ln .g-tbl { width: 633px; }
.g-blue { background: #b6c7de; flex: none; }
.gb10 { width: 11px; }
.gb14 { width: 15px; }
.gr { display: grid; height: 21px; border-bottom: 1px solid #666; background: #fff; }
.gr-s { grid-template-columns: 15px 56px 90px 43px 21px 80px 80px 67px 100px 85px; }
.gr-l { grid-template-columns: 15px 56px 90px 33px 21px 75px 55px 17px 70px 30px 86px 85px; }
.gr > span { display: flex; align-items: center; border-right: 1px solid #666; white-space: nowrap; overflow: hidden; padding: 0 3px 3px 5px; min-width: 0; height: 20px; font-size: 11.5px; }
.gr-last { height: 19px; border-bottom: 0; }
.gr-last > span { height: 19px; }
.gr-last .gb { height: 18px; line-height: 17px; }
.gr-end { height: 20px; border-bottom: 0; }
.gr > span.c { justify-content: center; padding: 0 0 3px; }
.gr > span.r { justify-content: flex-end; padding: 0 4px 3px 0; }
.gr > span.bc { padding: 0; justify-content: center; }
.gr > span.dc { padding-left: 2px; }
.gr > span.jn { padding-bottom: 0; }
.gh { background: linear-gradient(#f8f8f8, #ececec); height: 20px; border-bottom: 1px solid #d8d8d8; }
.gh > span { justify-content: center; border-right: 1px solid #fff; box-shadow: inset -1px 0 0 #dcdcdc; height: 19px; }
.gr.gh > span { padding: 0; }
.red { color: #f01020; }
.red .gb { color: #1a1a2a; }
.gb { display: block; width: calc(100% - 2px); height: 19px; line-height: 17px; text-align: center; font-weight: 400; border: 1px solid #7a7a7a; border-radius: 3px; background: linear-gradient(#fafafa, #ececec 50%, #cfcfcf); color: #1a1a2a; }
.gb-r { text-align: right; padding-right: 3px; }
.jn .i16 { margin-right: 5px; margin-left: -3px; }
.dc .i14 { margin-right: 6px; margin-top: 3px; }
.dot { display: block; width: 15px; height: 15px; margin-top: 3px; border-radius: 50%; background: radial-gradient(circle at 40% 35%, #2a78e0, #0a3fa0); }
.sb { width: 17px; flex: none; display: flex; flex-direction: column; background: #f2f2f2; }
.sb-up, .sb-dn { height: 16px; flex: none; position: relative; }
.sb-up::after, .sb-dn::after { content: ""; position: absolute; left: 5px; border-left: 3px solid transparent; border-right: 3px solid transparent; }
.sb-up::after { top: 6px; border-bottom: 3px solid #444; }
.sb-dn::after { top: 7px; border-top: 3px solid #444; }
.sb-sp { flex: 1; }
.sb-th { display: flex; align-items: center; justify-content: center; flex: none; margin: 0 1px; border: 1px solid #909aa5; border-radius: 2px; background: linear-gradient(90deg, #f2f2f2, #dcdcdc); }
.sb-th i { display: block; width: 7px; height: 7px; background: repeating-linear-gradient(#666 0 1px, transparent 1px 3px); }
.th48 { height: 48px; }
.th18 { height: 18px; }

.coll { margin-top: 4px; height: 20px; }
.cl { width: 128px; margin-left: 3px; white-space: nowrap; }
.coll .in { height: 20px; line-height: 18px; }
.coll .w31 { margin-left: 3px; }
.save-row { width: 666px; margin-top: 1px; display: flex; justify-content: flex-end; }
.save { width: 73px; height: 21px; line-height: 20px; }

.creamstrip { height: 8px; flex: none; background: #fffaee; }
.status { height: 26px; padding-top: 4px; flex: none; background: #b6c7de; display: flex; align-items: center; color: #1a1a2a; font-size: 12.3px; }
.s { white-space: nowrap; height: 20px; line-height: 20px; border-right: 1px solid #a8bad2; }
.s-jm { width: 24px; padding-left: 4px; }
.s-ovr { width: 35px; padding-left: 5px; color: #71808f; }
.s-date { width: 79px; padding-left: 10px; }
.s-msg { flex: 1; padding-left: 5px; display: flex; align-items: center; }
.s-msg .i16 { margin-right: 2px; }
.s-mcf { width: 35px; margin-left: 11px; padding-left: 6px; }
.s-no { padding: 0 4px 0 6px; border-right: 0; }
.whitestrip { height: 3px; flex: none; background: #e6edf5; }
```
